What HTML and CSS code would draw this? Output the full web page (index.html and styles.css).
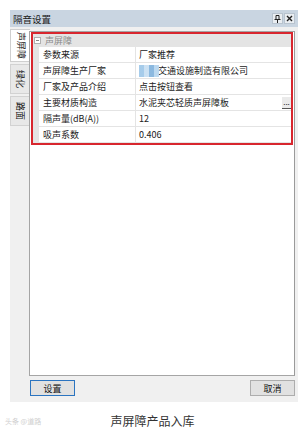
FILE: index.html
```html
<!DOCTYPE html>
<html lang="zh-CN">
<head>
    <meta charset="UTF-8">
    <title>隔音设置</title>
    <link rel="stylesheet" href="styles.css">
</head>
<body>
    <div class="window">
        <div class="titlebar">
            <span class="title">隔音设置</span>
            <span class="tbtns">
                <span class="tbtn">
                    <svg width="7" height="8" viewBox="0 0 7 8"><path d="M2 0.5h3v4h-3z M0.5 4.5h6 M3.5 4.5v3.5" fill="none" stroke="#222" stroke-width="1"/></svg>
                </span>
                <span class="tbtn">
                    <svg width="7" height="7" viewBox="0 0 7 7"><path d="M1 1l5 5M6 1l-5 5" stroke="#222" stroke-width="1.4"/></svg>
                </span>
            </span>
        </div>
        <div class="main">
            <div class="tabs">
                <div class="tab active"><span>声屏障</span></div>
                <div class="tab"><span>绿化</span></div>
                <div class="tab"><span>路面</span></div>
            </div>
            <div class="content">
                <div class="panel">
                    <div class="props">
                        <div class="cat"><span class="toggle"></span>声屏障</div>
                        <div class="row"><span class="gut"></span><span class="name">参数来源</span><span class="val">厂家推荐</span></div>
                        <div class="row"><span class="gut"></span><span class="name">声屏障生产厂家</span><span class="val"><span class="blur"></span>交通设施制造有限公司</span></div>
                        <div class="row"><span class="gut"></span><span class="name">厂家及产品介绍</span><span class="val">点击按钮查看</span></div>
                        <div class="row"><span class="gut"></span><span class="name">主要材质构造</span><span class="val">水泥夹芯轻质声屏障板<span class="more">...</span></span></div>
                        <div class="row"><span class="gut"></span><span class="name">隔声量(dB(A))</span><span class="val">12</span></div>
                        <div class="row"><span class="gut"></span><span class="name">吸声系数</span><span class="val">0.406</span></div>
                    </div>
                </div>
                <div class="buttons">
                    <button class="btn default">设置</button>
                    <button class="btn">取消</button>
                </div>
            </div>
        </div>
    </div>
    <div class="caption">
        <span class="mark">头条 @道路</span>
        声屏障产品入库
    </div>
</body>
</html>
```
FILE: styles.css
```css
body {
    margin: 0;
    background: #fff;
    font-family: "Noto Sans CJK SC", "Liberation Sans", sans-serif;
    font-size: 9px;
    color: #222;
}
.window {
    width: 288px;
    margin: 10px 0 0 10px;
    background: #f0f0f0;
}
.titlebar {
    height: 17px;
    background: #c9d5e1;
    display: flex;
    align-items: center;
    justify-content: space-between;
    padding: 0 3px;
}
.title {
    font-size: 9.5px;
    color: #1a1a1a;
}
.tbtns {
    display: flex;
    gap: 1px;
}
.tbtn {
    width: 9px;
    height: 9px;
    background: #e9edf1;
    border: 1px solid #b8c3ce;
    display: flex;
    align-items: center;
    justify-content: center;
}
.main {
    display: flex;
    height: 375px;
}
.tabs {
    width: 19px;
    display: flex;
    flex-direction: column;
    gap: 2px;
    padding-top: 2px;
}
.tab {
    height: 30px;
    background: #e8e8e8;
    border: 1px solid #d2d2d2;
    border-right: none;
    box-sizing: border-box;
    display: flex;
    align-items: center;
    justify-content: center;
    font-size: 9px;
    color: #222;
}
.tab.active {
    height: 33px;
    background: #fff;
    width: 20px;
    border-color: #cfcfcf;
}
.tab span {
    writing-mode: vertical-rl;
    text-orientation: sideways;
    line-height: 10px;
}
.content {
    flex: 1;
    display: flex;
    flex-direction: column;
    padding: 4px 3px 4px 0;
}
.panel {
    height: 345px;
    box-sizing: border-box;
    background: #fff;
    border: 1px solid #a5a5a5;
    border-right-color: #9a9a9a;
}
.props {
    margin: 0 1px 0 1px;
    border: 2px solid #d8262e;
}
.cat {
    height: 13px;
    background: #e4e4e4;
    display: flex;
    align-items: center;
    color: #8a8a8a;
    font-size: 9px;
}
.toggle {
    width: 5px;
    height: 5px;
    border: 1px solid #b0b0b0;
    margin: 0 4px 0 1px;
    position: relative;
    background: #fff;
}
.toggle::after {
    content: "";
    position: absolute;
    left: 1px;
    top: 2px;
    width: 3px;
    height: 1px;
    background: #888;
}
.row {
    display: grid;
    grid-template-columns: 6px 97px 1fr;
    height: 16px;
}
.gut {
    background: #e4e4e4;
}
.name, .val {
    border-bottom: 1px solid #e4e4e4;
    display: flex;
    align-items: center;
    padding-left: 4px;
    white-space: nowrap;
}
.name {
    border-right: 1px solid #e4e4e4;
}
.val {
    padding-left: 3px;
    position: relative;
}
.blur {
    width: 20px;
    height: 12px;
    margin-right: -1px;
    background:
        linear-gradient(90deg, #9cc6e8 0 5px, #c6def2 5px 10px, #7fb1dc 10px 15px, #b4d4ee 15px 20px);
    opacity: 0.9;
}
.more {
    position: absolute;
    right: 0;
    top: 2px;
    width: 9px;
    height: 11px;
    background: #eaeaea;
    font-size: 8px;
    line-height: 9px;
    text-align: center;
    border-bottom: 1px solid #555;
}
.buttons {
    display: flex;
    justify-content: space-between;
    margin-top: 4px;
    padding-left: 1px;
}
.btn {
    width: 45px;
    height: 16px;
    padding: 0;
    background: #e1e1e1;
    border: 1px solid #adadad;
    font-family: "Noto Sans CJK SC", sans-serif;
    font-size: 9px;
    color: #111;
}
.btn.default {
    border-color: #2b74c0;
}
.caption {
    position: relative;
    margin-top: 11px;
    text-align: center;
    font-size: 12px;
    line-height: 16px;
    color: #333;
}
.mark {
    position: absolute;
    left: 5px;
    top: 3px;
    font-size: 7px;
    line-height: 10px;
    color: #cfcfcf;
}
```
